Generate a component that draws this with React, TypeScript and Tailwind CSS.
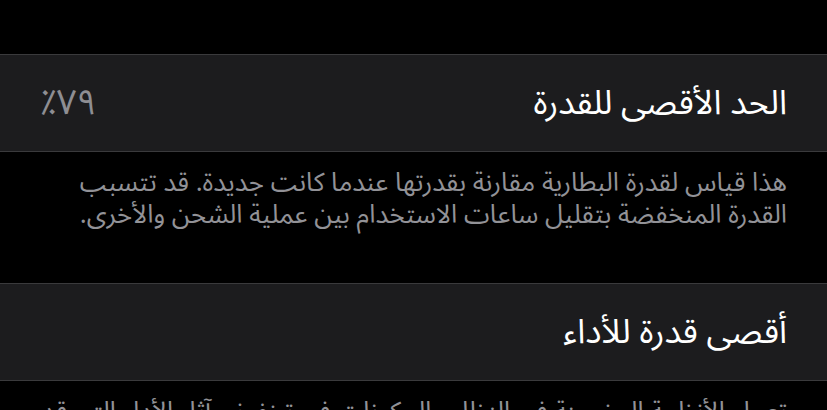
// Battery health detail rows (dark, right-to-left)

const FONT = '"Noto Sans Arabic", "DejaVu Sans", "Noto Sans", sans-serif'

function Row({ title, value }: { title: string; value?: string }) {
  return (
    <div className="flex h-[98px] items-center justify-between border-y border-[#3a3a3c] bg-[#1c1c1e] px-[40px]">
      <span className="text-[34px] leading-none text-white">{title}</span>
      {value && <span className="text-[35px] leading-none text-[#8e8e93]">{value}</span>}
    </div>
  )
}

function Footer({ text, className }: { text: string; className?: string }) {
  return (
    <p className={`px-[40px] pt-[15px] text-[26px] leading-[32px] text-[#929297] ${className ?? ''}`}>
      {text}
    </p>
  )
}

export default function App() {
  return (
    <div dir="rtl" className="h-[410px] w-[827px] overflow-hidden bg-black" style={{ fontFamily: FONT }}>
      <div className="h-[54px]" />
      <Row title="الحد الأقصى للقدرة" value="٧٩٪" />
      <Footer
        className="h-[131px]"
        text="هذا قياس لقدرة البطارية مقارنة بقدرتها عندما كانت جديدة. قد تتسبب القدرة المنخفضة بتقليل ساعات الاستخدام بين عملية الشحن والأخرى."
      />
      <Row title="أقصى قدرة للأداء" />
      <Footer text="تعمل الأنظمة المضمنة في النظام والمكونات في تخفيف آثار الأداء التي قد تلاحظ مع تقادم البطارية كيميائيًا." />
    </div>
  )
}
